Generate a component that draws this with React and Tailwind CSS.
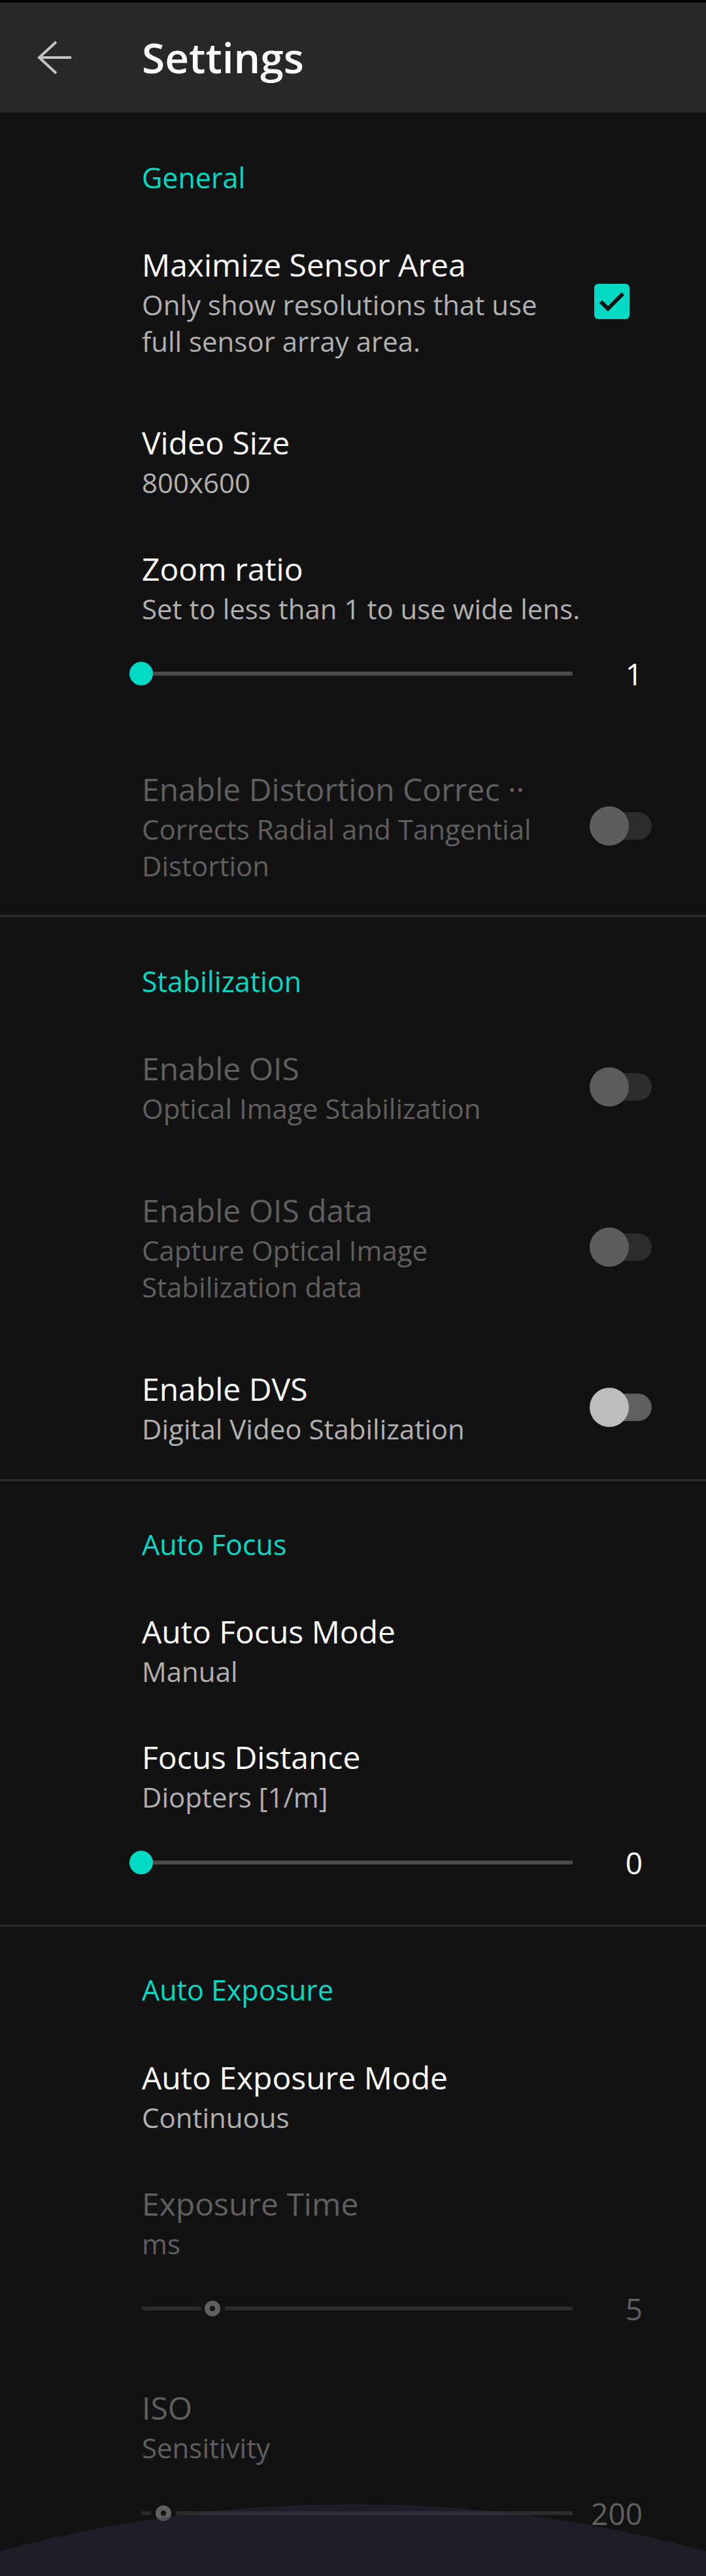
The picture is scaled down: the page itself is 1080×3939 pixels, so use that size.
import React from 'react';

const TEAL = 'bg-[#03DAC5]';

const BackArrow = () => (
  <svg width="56" height="56" viewBox="0 0 56 56" className="ml-[56px] shrink-0">
    <path d="M30 4 L4 28 L30 52 M4 28 H53" fill="none" stroke="#c4c4c4" strokeWidth="4" strokeLinejoin="miter" />
  </svg>
);

const Checkbox = () => (
  <div className={`ml-[52px] flex h-[54px] w-[54px] items-center justify-center rounded-[6px] ${TEAL}`}>
    <svg width="54" height="54" viewBox="0 0 54 54">
      <path d="M10 27 L21 38 L44 15" fill="none" stroke="#121212" strokeWidth="6" />
    </svg>
  </div>
);

const Toggle = ({ enabled }) => (
  <div className="relative ml-[45px] h-[60px] w-[95px]">
    <div className={`absolute left-[9px] top-[9px] h-[42px] w-[86px] rounded-full ${enabled ? 'bg-[#5f5f5f]' : 'bg-[#2c2c2c]'}`} />
    <div className={`absolute left-0 top-0 h-[60px] w-[60px] rounded-full ${enabled ? 'bg-[#bdbdbd]' : 'bg-[#5d5d5d]'}`} />
  </div>
);

const Heading = ({ children, spacing }) => (
  <div className={`${spacing} pb-[36px] pl-[217px] text-[43px] font-medium leading-[56px] text-[#03DAC5]`}>
    {children}
  </div>
);

const Divider = () => <div className="h-[3px] bg-[#2e2e2e]" />;

const Pref = ({ title, lines = [], disabled, widget, spacing, children }) => (
  <div className={spacing}>
    <div className="flex items-center pl-[217px]">
      <div className={widget ? 'w-[640px]' : 'w-[766px]'}>
        <div
          className={`h-[66px] overflow-hidden whitespace-nowrap text-[48px] leading-[66px] ${
            disabled ? 'text-[#5f5f5f]' : 'text-white'
          }`}
        >
          {title}
        </div>
        {lines.map((line) => (
          <div
            key={line}
            className={`whitespace-nowrap text-[42px] leading-[56px] ${disabled ? 'text-[#5f5f5f]' : 'text-[#b0b0b0]'}`}
          >
            {line}
          </div>
        ))}
      </div>
      {widget}
    </div>
    {children}
  </div>
);

const Slider = ({ value, margin }) => (
  <div className={`${margin} flex h-[60px] items-center pl-[217px]`}>
    <div className="relative flex h-[60px] w-[659px] items-center">
      <div className="h-[6px] w-full bg-[#4a4a4a]" />
      <div className={`absolute left-[-19px] top-[12px] h-[36px] w-[36px] rounded-full ${TEAL}`} />
    </div>
    <div className="w-[107px] text-right text-[46px] leading-[60px] text-white">{value}</div>
  </div>
);

const DisabledSlider = ({ value, margin, leftSeg }) => (
  <div className={`${margin} flex h-[60px] items-center pl-[217px]`}>
    <div className="flex h-[60px] w-[659px] items-center">
      <div className={`h-[6px] bg-[#2b2b2b] ${leftSeg}`} />
      <div className="h-[24px] w-[24px] rounded-full border-[8px] border-[#5f5f5f] bg-[#121212]" />
      <div className="ml-[7px] h-[6px] flex-1 bg-[#2b2b2b]" />
    </div>
    <div className="w-[107px] text-right text-[46px] leading-[60px] text-[#5f5f5f]">{value}</div>
  </div>
);

export default function App() {
  return (
    <div className="relative h-[3939px] w-full overflow-hidden bg-[#121212] font-['Open_Sans','Noto_Sans',sans-serif]">
      <div className="h-[4px] bg-black" />

      {/* Toolbar */}
      <header className="flex h-[168px] items-center bg-[#282828]">
        <BackArrow />
        <h1 className="ml-[105px] text-[64px] font-semibold leading-[64px] text-white">Settings</h1>
      </header>

      {/* General */}
      <Heading spacing="pt-[72px]">General</Heading>
      <Pref
        title="Maximize Sensor Area"
        lines={['Only show resolutions that use', 'full sensor array area.']}
        widget={<Checkbox />}
        spacing="pt-[36px] pb-[58px]"
      />
      <Pref title="Video Size" lines={['800x600']} spacing="pt-[36px] pb-[35px]" />
      <Pref title="Zoom ratio" lines={['Set to less than 1 to use wide lens.']} spacing="pt-[36px] pb-[78px]">
        <Slider value="1" margin="mt-[41px]" />
      </Pref>
      <Pref
        title="Enable Distortion Correc ··"
        lines={['Corrects Radial and Tangential', 'Distortion']}
        disabled
        widget={<Toggle />}
        spacing="pt-[36px] pb-[47px]"
      />
      <Divider />

      {/* Stabilization */}
      <Heading spacing="pt-[71px]">Stabilization</Heading>
      <Pref
        title="Enable OIS"
        lines={['Optical Image Stabilization']}
        disabled
        widget={<Toggle />}
        spacing="pt-[36px] pb-[59px]"
      />
      <Pref
        title="Enable OIS data"
        lines={['Capture Optical Image', 'Stabilization data']}
        disabled
        widget={<Toggle />}
        spacing="pt-[36px] pb-[59px]"
      />
      <Pref
        title="Enable DVS"
        lines={['Digital Video Stabilization']}
        widget={<Toggle enabled />}
        spacing="pt-[36px] pb-[49px]"
      />
      <Divider />

      {/* Auto Focus */}
      <Heading spacing="pt-[69px]">Auto Focus</Heading>
      <Pref title="Auto Focus Mode" lines={['Manual']} spacing="pt-[36px] pb-[34px]" />
      <Pref title="Focus Distance" lines={['Diopters [1/m]']} spacing="pt-[36px] pb-[65px]">
        <Slider value="0" margin="mt-[42px]" />
      </Pref>
      <Divider />

      {/* Auto Exposure */}
      <Heading spacing="pt-[69px]">Auto Exposure</Heading>
      <Pref title="Auto Exposure Mode" lines={['Continuous']} spacing="pt-[37px] pb-[35px]" />
      <Pref title="Exposure Time" lines={['ms']} disabled spacing="pt-[36px] pb-[53px]">
        <DisabledSlider value="5" margin="mt-[41px]" leftSeg="w-[91px] mr-[5px]" />
      </Pref>
      <Pref title="ISO" lines={['Sensitivity']} disabled spacing="pt-[36px]">
        <DisabledSlider value="200" margin="mt-[42px]" leftSeg="w-[14px] mr-[7px]" />
      </Pref>

      {/* bottom gesture sheet edge */}
      <div className="pointer-events-none absolute left-[-1521px] top-[3829px] h-[4122px] w-[4122px] rounded-full bg-[rgba(56,49,81,0.32)]" />
    </div>
  );
}
